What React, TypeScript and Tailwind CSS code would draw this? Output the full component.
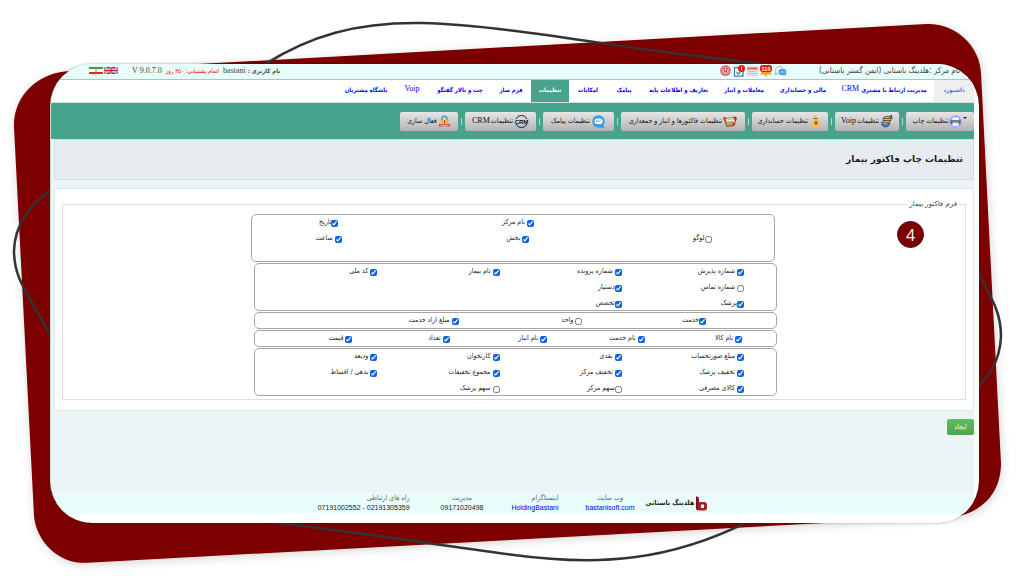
import { clsx } from "clsx";
import type { ReactNode } from "react";

type Field = { label: string; checked?: boolean; tight?: boolean };

const on = (label: string, tight = false): Field => ({ label, checked: true, tight });
const off = (label: string, tight = false): Field => ({ label, checked: false, tight });

const menu = [
  { title: "داشبورد", width: "w-[40px]" },
  { title: "مدیریت ارتباط با مشتری", latin: "CRM", width: "w-[100px]" },
  { title: "مالی و حسابداری", width: "w-[62px]" },
  { title: "معاملات و انبار", width: "w-[56px]" },
  { title: "تعاریف و اطلاعات پایه", width: "w-[75px]" },
  { title: "پیامک", width: "w-[34px]" },
  { title: "امکانات", width: "w-[38px]" },
  { title: "تنظیمات", width: "w-[38px]" },
  { title: "فرم ساز", width: "w-[40px]" },
  { title: "چت و تالار گفتگو", width: "w-[62px]" },
  { title: "", latin: "Voip", width: "w-[34px]" },
  { title: "باشگاه مشتریان", width: "w-[58px]" },
];

const patientFields: (Field | null)[] = [
  on("شماره پذیرش"), on("شماره پرونده"), on("نام بیمار"), on("کد ملی"),
  off("شماره تماس"), on("دستیار", true), null, null,
  on("پزشک", true), on("تخصص", true), null, null,
];

const centerFields: (Field | null)[] = [
  null, on("نام مرکز"), on("تاریخ", true),
  off("لوگو", true), on("بخش"), on("ساعت"),
];

const serviceFields = [on("خدمت", true), off("واحد"), on("مبلغ ازاد خدمت")];

const goodsFields = [on("نام کالا"), on("نام خدمت"), on("نام انبار"), on("تعداد"), on("قیمت")];

const paymentFields: (Field | null)[] = [
  on("مبلغ صورتحساب"), on("نقدی"), on("کارتخوان"), on("ودیعه"),
  on("تخفیف پزشک"), on("تخفیف مرکز"), on("مجموع تخفیفات"), on("بدهی / اقساط"),
  on("کالای مصرفی"), off("سهم مرکز", true), off("سهم پزشک"), null,
];

const Backdrop = () => (
  <svg
    className="absolute inset-0 h-full w-full"
    viewBox="0 0 1024 576"
    preserveAspectRatio="none"
    aria-hidden="true"
  >
    <defs>
      <filter id="soft" x="-5%" y="-5%" width="110%" height="110%">
        <feDropShadow dx="1" dy="2" stdDeviation="5" floodColor="#000" floodOpacity="0.16" />
      </filter>
    </defs>
    <path
      filter="url(#soft)"
      fill="#7d0000"
      d="M70 71 L926 24 C957 23 980 47 981 73 L1001 463 C1001 490 985 509 960 515 L88 562 C58 564 36 540 34 515 L14 127 C13 96 38 72 70 71 Z"
    />
    <g fill="none" stroke="#333" strokeWidth="2.5">
      <path d="M265 64 C310 36 355 22 422 23 C500 25 600 44 680 54 C715 58 745 62 775 66" />
      <path d="M268 521 C340 529 430 543 512 554 C600 566 670 560 748 521" />
      <path d="M52 189 C30 204 15 224 14 250 C14 277 24 287 52 338" />
      <path d="M966 250 C992 299 1001 310 1001 336 C1000 362 986 382 966 396" />
    </g>
  </svg>
);

const Iran = () => (
  <svg className="h-[7px] w-[14px]" viewBox="0 0 14 7" aria-hidden="true">
    <path fill="#fff" d="M0 0h14v7H0z" />
    <path fill="#35a24a" d="M0 0h14v2H0z" />
    <path fill="#e02b2b" d="M0 5h14v2H0z" />
    <circle cx="7" cy="3.5" r="1" fill="#e77" />
  </svg>
);

const Britain = () => (
  <svg className="h-[7px] w-[14px]" viewBox="0 0 14 7" aria-hidden="true">
    <path fill="#29367c" d="M0 0h14v7H0z" />
    <path stroke="#fff" strokeWidth="1.6" d="M0 0l14 7M14 0L0 7" />
    <path stroke="#d22" strokeWidth=".6" d="M0 0l14 7M14 0L0 7" />
    <path stroke="#fff" strokeWidth="2.6" d="M7 0v7M0 3.5h14" />
    <path stroke="#d22" strokeWidth="1.3" d="M7 0v7M0 3.5h14" />
  </svg>
);

const Power = () => (
  <svg className="size-[11px]" viewBox="0 0 22 22" fill="none" aria-hidden="true">
    <circle cx="11" cy="11" r="10.5" fill="#c9504f" />
    <circle cx="11" cy="11" r="7.5" stroke="#f6dede" strokeWidth="1.4" />
    <path d="M8 8a4.5 4.5 0 1 0 6 0M11 5.500v6" stroke="#fff" strokeWidth="1.6" />
  </svg>
);

const Tasks = () => (
  <svg className="h-[12px] w-[12px]" viewBox="0 0 24 24" fill="none" aria-hidden="true">
    <path d="M3 5h17v17H3z" fill="#fff" stroke="#3a7fc4" strokeWidth="2.500" />
    <path d="M7 14l4 4 6-8" stroke="#3a7fc4" strokeWidth="2.500" />
    <circle cx="17" cy="7" r="7" fill="#e11" />
    <path d="M17 3.500v7" stroke="#fff" strokeWidth="2" />
  </svg>
);

const Planner = () => (
  <svg className="h-[10px] w-[11px]" viewBox="0 0 22 20" fill="none" aria-hidden="true">
    <path d="M1 2h20v17H1z" fill="#e4e4e4" stroke="#bbb" />
    <path d="M1 3h20v4H1z" fill="#d9685f" />
    <path d="M4 11h14M4 15h14" stroke="#b5b0ac" strokeWidth="2" strokeDasharray="3 2" />
  </svg>
);

const Alerts = () => (
  <svg className="h-[12px] w-[12px]" viewBox="0 0 24 24" aria-hidden="true">
    <path d="M3 6h18v9l3 4H15l-3 5-3-5H0l3-4z" fill="#f6a01c" />
    <rect x="0" y="0" width="24" height="14" rx="5" fill="#e31b1b" />
    <text x="12" y="11" textAnchor="middle" fontSize="11" fontWeight="700" fill="#fff" fontFamily="Liberation Sans, sans-serif">
      110
    </text>
  </svg>
);

const Chat = () => (
  <svg className="h-[11px] w-[13px]" viewBox="0 0 26 22" fill="none" aria-hidden="true">
    <path d="M4 15a8 8 0 1 1 14-8M4 15l-2 4 6-2" stroke="#7d9bb5" strokeWidth="1.500" />
    <ellipse cx="17" cy="14" rx="8" ry="6.500" fill="#4d9ede" />
    <path d="M20 19l4 3-1-5z" fill="#4d9ede" />
    <path d="M12.500 14h9" stroke="#fff" strokeWidth="2" strokeDasharray="2 1.500" />
  </svg>
);

const Printer = () => (
  <svg className="size-[13px]" viewBox="0 0 26 26" aria-hidden="true">
    <circle cx="13" cy="13" r="12.500" fill="#a7a3fa" />
    <path d="M7 5h12v6H7z" fill="#fff" />
    <path d="M3 10h20v8H3z" fill="#54617f" />
    <path d="M7 15h12v7H7z" fill="#e8ecfb" />
    <path d="M5 12h16" stroke="#8fb0e0" strokeWidth="1.500" />
  </svg>
);

const Phone = () => (
  <svg className="size-[13px]" viewBox="0 0 26 26" fill="none" aria-hidden="true">
    <path d="M4 13c-3 6 1 11 7 11 5 0 9-3 9-8l-5 1c0 3-4 4-6 1z" fill="#3f7fc8" stroke="#234" />
    <ellipse cx="14" cy="9" rx="8" ry="6.500" fill="#e8c63a" stroke="#333" strokeWidth="1.500" />
    <path d="M7 7h14M7 11h14" stroke="#333" strokeWidth="1.500" />
    <path d="M18 3l5-2 1 7" stroke="#2b5b48" strokeWidth="2.500" />
  </svg>
);

const Money = () => (
  <svg className="size-[13px]" viewBox="0 0 26 26" aria-hidden="true">
    <path d="M9 1h6l1 6c6 4 8 9 7 15l-5 3H5c-4-5 1-14 6-18z" fill="#f2bd5e" />
    <path d="M9 7h8" stroke="#a8611d" strokeWidth="2" />
    <circle cx="14" cy="16" r="3.500" fill="#b9762b" />
    <path d="M14 12.500v7" stroke="#4b2c10" strokeWidth="1.500" />
  </svg>
);

const Invoice = () => (
  <svg className="h-[12px] w-[14px]" viewBox="0 0 28 24" aria-hidden="true">
    <path d="M0 4l9 2 16-3 3 3-5 16-16 2z" fill="#c4352f" />
    <path d="M5 8l15-3 4 9-15 5z" fill="#f5ecd8" />
    <path d="M6 14l15-2-2 8-11 2z" fill="#92b654" />
    <path d="M9 10l10-2" stroke="#b98" strokeWidth="1.500" />
  </svg>
);

const Sms = () => (
  <svg className="h-[13px] w-[15px]" viewBox="0 0 30 26" aria-hidden="true">
    <circle cx="15" cy="13" r="12.500" fill="#3b9de6" />
    <path d="M22 20l7 5-11 0z" fill="#2f8ad2" />
    <rect x="7" y="7" width="16" height="11" rx="5" fill="#fff" />
    <path d="M10 12.500h10" stroke="#3b9de6" strokeWidth="3" strokeDasharray="2 1.500" />
  </svg>
);

const Crm = () => (
  <svg className="h-[13px] w-[15px]" viewBox="0 0 30 26" fill="none" aria-hidden="true">
    <path d="M4 8a12 12 0 0 1 22 0M4 18a12 12 0 0 0 22 0" stroke="#222" strokeWidth="2" />
    <text x="15" y="17.500" textAnchor="middle" fontSize="12" fontWeight="700" fill="#111" fontFamily="Liberation Sans, sans-serif">
      CRM
    </text>
  </svg>
);

const Lock = () => (
  <svg className="size-[13px]" viewBox="0 0 26 26" fill="none" aria-hidden="true">
    <circle cx="13" cy="14" r="12" fill="#a9d8f2" />
    <path d="M8 11V7a5 5 0 0 1 10 0v4" stroke="#4b8fc0" strokeWidth="2.500" />
    <path d="M5 10h16v9H5z" fill="#f7b234" />
    <path d="M13 11v6" stroke="#8b4d10" strokeWidth="2" />
    <path d="M2 18h22v5H2z" fill="#e0452f" />
    <path d="M5 20.500h16" stroke="#fff" strokeWidth="1.200" />
  </svg>
);

const Logo = () => (
  <svg className="h-[15px] w-[11px]" viewBox="0 0 22 30" aria-hidden="true">
    <path d="M0 0l6 3v9h10q6 0 6 6v6q0 5-6 5H5q-5 0-5-5z" fill="#a12127" />
    <path d="M0 2l4 4v22q-4-1-4-5z" fill="#6e1418" />
    <path d="M10 17h6v7h-6z" fill="#e8fcfa" />
  </svg>
);

const tools: { title: string; latin?: string; width: string; icon: ReactNode }[] = [
  { title: "تنظیمات چاپ", width: "w-[68px]", icon: <Printer /> },
  { title: "تنظیمات", latin: "Voip", width: "w-[64px]", icon: <Phone /> },
  { title: "تنظیمات حسابداری", width: "w-[76px]", icon: <Money /> },
  { title: "تنظیمات فاکتورها و انبار و جمعداری", width: "w-[124px]", icon: <Invoice /> },
  { title: "تنظیمات پیامک", width: "w-[71px]", icon: <Sms /> },
  { title: "تنظیمات", latin: "CRM", width: "w-[71px]", icon: <Crm /> },
  { title: "فعال سازی", width: "w-[58px]", icon: <Lock /> },
];

const Latin = ({ children }: { children: ReactNode }) => (
  <span className="font-['Liberation_Serif',serif] text-[8px] font-normal">{children}</span>
);

const Check = ({ field }: { field: Field | null }) => {
  if (!field) return <span />;
  return (
    <label
      className={clsx("flex h-[14px] items-center whitespace-nowrap text-[7px] text-[#222]", {
        "gap-0.5": !field.tight,
      })}
    >
      <input type="checkbox" defaultChecked={field.checked} className="mt-0.5 size-[7px] accent-[#0b63e3]" />
      {field.label}
    </label>
  );
};

const Group = ({ fields, className }: { fields: (Field | null)[]; className: string }) => (
  <div className={clsx("grid rounded-[5px] border border-[#a6a6a6]", className)}>
    {fields.map((field, i) => (
      <Check key={i} field={field} />
    ))}
  </div>
);

const TopBar = () => (
  <header className="flex h-4 items-center justify-between border-b border-[#a3c6d6] bg-[#e8fcfa] pr-[14px] pb-0.5 pl-[38px] text-[7px] text-[#444]">
    <div className="flex items-center gap-8">
      <span className="text-[8px] leading-[12px] whitespace-nowrap">
        نام مرکز :هلدینگ باستانی (ایمن گستر باستانی)
      </span>
      <div className="flex items-center gap-0.5">
        <Chat />
        <Alerts />
        <Planner />
        <Tasks />
        <Power />
      </div>
    </div>
    <div className="flex items-center whitespace-nowrap">
      <span className="text-[6px] font-bold">نام کاربری :</span>
      <span className="mr-0.5">
        <Latin>bastani</Latin>
      </span>
      <span className="mr-1 text-[6px] text-[#f00]">اتمام پشتیبانی: ۳۵۰ روز</span>
      <span dir="ltr" className="mr-1">
        <Latin>V 9.0.7.0</Latin>
      </span>
      <div className="mr-[14px] flex gap-px">
        <Britain />
        <Iran />
      </div>
    </div>
  </header>
);

const Menu = () => (
  <nav className="flex h-[23px] border-b border-[#cfe0de] bg-white text-[6px] font-bold">
    {menu.map(({ title, latin, width }) => (
      <a
        key={title}
        href="#"
        className={clsx("flex shrink-0 items-center justify-center gap-0.5 pb-1 whitespace-nowrap", width, {
          "bg-[#efefef] text-[#3b7de0]": title === "داشبورد",
          "bg-[#47a38c] text-white": title === "تنظیمات",
          "text-[#00f]": title !== "داشبورد" && title !== "تنظیمات",
        })}
      >
        {title}
        {latin && <Latin>{latin}</Latin>}
      </a>
    ))}
  </nav>
);

const Toolbar = () => (
  <div className="flex h-9 items-center bg-[#47a38c] text-[7px]">
    {tools.map(({ title, latin, width, icon }, i) => (
      <div key={i} className="flex shrink-0 items-center">
        {i > 0 && <span className="mx-[3px] h-[7px] w-px bg-[#b9dcd2]" />}
        <button
          className={clsx(
            "flex h-[19px] items-center justify-center gap-px rounded-[2px] bg-linear-to-b from-[#e6e6e6] to-[#b4b4b4] whitespace-nowrap text-[#111]",
            width
          )}
        >
          {i === 0 && <span className="mb-1.5 border-x-2 border-t-2 border-x-transparent border-t-[#222]" />}
          {icon}
          {title}
          {latin && <Latin>{latin}</Latin>}
        </button>
      </div>
    ))}
  </div>
);

const Footer = () => (
  <footer className="flex h-[21px] items-center justify-center bg-[#e8fcfa] text-[7px] leading-[9px] whitespace-nowrap text-[#666]">
    <div className="flex items-center gap-0.5 font-bold text-[#222]">
      <Logo />
      هلدینگ باستانی
    </div>
    <div className="mr-[11px] text-center">
      <p>وب سایت</p>
      <a href="#" className="font-['Liberation_Sans',sans-serif] text-[#00f]">
        bastanisoft.com
      </a>
    </div>
    <div className="mr-[27px]">
      <p>اینستاگرام</p>
      <a href="#" className="font-['Liberation_Sans',sans-serif] text-[#00f]">
        HoldingBastani
      </a>
    </div>
    <div className="mr-[28px] text-center">
      <p>مدیریت</p>
      <p className="font-['Liberation_Sans',sans-serif] text-[#222]">09171020498</p>
    </div>
    <div className="mr-[31px]">
      <p>راه های ارتباطی</p>
      <p dir="ltr" className="font-['Liberation_Sans',sans-serif] text-[#222]">
        07191002552 - 02191305359
      </p>
    </div>
  </footer>
);

export default function App() {
  return (
    <div className="relative min-h-screen overflow-hidden bg-white pt-16 pr-[45px] pb-[54px] pl-[50px] font-['DejaVu_Sans_Condensed','DejaVu_Sans',sans-serif]">
      <Backdrop />
      <div
        dir="rtl"
        className="relative overflow-hidden rounded-[42px] border-l border-[#ccd6da] bg-white pr-[5px] pb-[9px] shadow-[0_0_3px_rgba(0,0,0,0.3)]"
      >
        <TopBar />
        <Menu />
        <Toolbar />
        <main className="bg-[#ecf4f7] pb-[57px] pl-[3px]">
          <h1 className="flex h-[41px] items-center border border-[#d5dde1] bg-[#e7ecf0] pr-2.5 font-['DejaVu_Sans',sans-serif] text-[9px] font-bold text-[#1c1c1c]">
            تنظیمات چاپ فاکتور بیمار
          </h1>
          <form onSubmit={(e) => e.preventDefault()}>
            <div className="relative mt-2 border border-[#e1e8ea] bg-white px-[7px] pt-2.5 pb-2.5">
              <fieldset className="border border-[#ddd] pb-[3px]">
                <legend className="mr-1.5 px-0.5 font-['DejaVu_Sans',sans-serif] text-[7px] leading-[10px] text-[#444]">
                  فرم فاکتور بیمار
                </legend>
                <div className="mx-auto flex w-[526px] flex-col gap-px pt-[5px]">
                  <Group
                    fields={centerFields}
                    className="mr-0.5 h-12 grid-cols-[144fr_226fr_154fr] content-start justify-items-center gap-y-0.5"
                  />
                  <Group fields={patientFields} className="ml-[3px] grid-cols-4 gap-y-0.5 pr-8" />
                  <Group fields={serviceFields} className="ml-[3px] h-[17px] grid-cols-3 pr-[70px] pl-20" />
                  <Group fields={goodsFields} className="ml-[3px] h-[17px] grid-cols-5 pr-[34px]" />
                  <Group fields={paymentFields} className="ml-[3px] grid-cols-4 gap-y-0.5 pr-8" />
                </div>
              </fieldset>
              <span className="absolute top-8 right-[49px] flex size-[27px] items-center justify-center rounded-full border border-[#4a1010] bg-[#7d0000] font-['Open_Sans',sans-serif] text-base text-white">
                4
              </span>
            </div>
            <button className="mt-2 h-4 w-[27px] rounded-[2px] bg-linear-to-b from-[#62bd62] to-[#4ca64c] text-[7px] text-white">
              ایجاد
            </button>
          </form>
        </main>
        <Footer />
      </div>
    </div>
  );
}
